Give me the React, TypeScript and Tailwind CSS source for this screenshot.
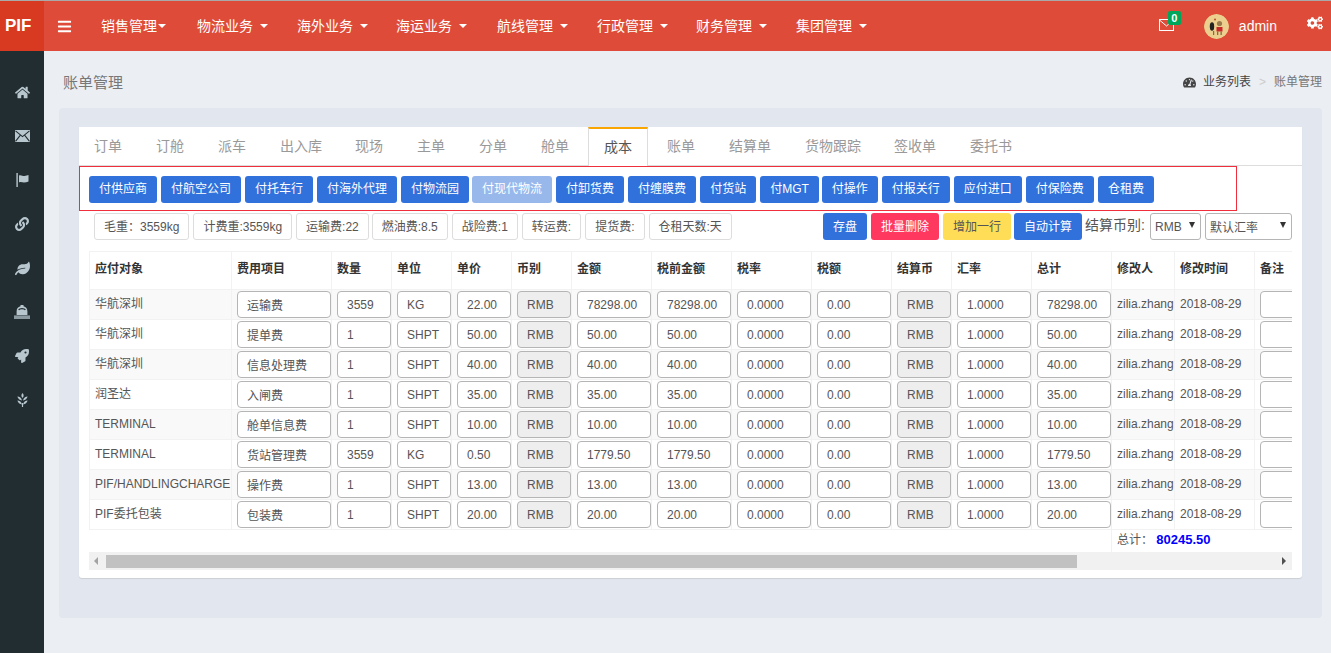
import React from "react";
import { FaHome, FaLink, FaLeaf, FaRocket, FaCogs, FaTachometerAlt, FaBars } from "react-icons/fa";

const F = "font-['Liberation_Sans','Noto_Sans_CJK_SC',sans-serif]";

const menus: [string, string][] = [
  ["销售管理", "w-[96px]"],
  ["物流业务", "w-[100px]"],
  ["海外业务", "w-[99px]"],
  ["海运业务", "w-[101px]"],
  ["航线管理", "w-[100px]"],
  ["行政管理", "w-[99px]"],
  ["财务管理", "w-[100px]"],
  ["集团管理", "w-[100px]"],
];

const tabs = ["订单", "订舱", "派车", "出入库", "现场", "主单", "分单", "舱单", "成本", "账单", "结算单", "货物跟踪", "签收单", "委托书"];

const actions = ["付供应商", "付航空公司", "付托车行", "付海外代理", "付物流园", "付现代物流", "付卸货费", "付缠膜费", "付货站", "付MGT", "付操作", "付报关行", "应付进口", "付保险费", "仓租费"];

const stats = ["毛重：3559kg", "计费重:3559kg", "运输费:22", "燃油费:8.5", "战险费:1", "转运费:", "提货费:", "仓租天数:天"];

const heads = ["应付对象", "费用项目", "数量", "单位", "单价", "币别", "金额", "税前金额", "税率", "税额", "结算币", "汇率", "总计", "修改人", "修改时间", "备注"];

const rows: [string, string, string, string, string, string][] = [
  ["华航深圳", "运输费", "3559", "KG", "22.00", "78298.00"],
  ["华航深圳", "提单费", "1", "SHPT", "50.00", "50.00"],
  ["华航深圳", "信息处理费", "1", "SHPT", "40.00", "40.00"],
  ["润圣达", "入闸费", "1", "SHPT", "35.00", "35.00"],
  ["TERMINAL", "舱单信息费", "1", "SHPT", "10.00", "10.00"],
  ["TERMINAL", "货站管理费", "3559", "KG", "0.50", "1779.50"],
  ["PIF/HANDLINGCHARGE", "操作费", "1", "SHPT", "13.00", "13.00"],
  ["PIF委托包装", "包装费", "1", "SHPT", "20.00", "20.00"],
];

function Field({ v, w, gray, cjk }: { v: string; w: string; gray?: boolean; cjk?: boolean }) {
  return (
    <div className={`${w} h-[27px] ml-[5px] border border-[#b5b5b5] rounded-[4px] pl-[9px] flex items-center text-[12px] text-[#555] ${cjk ? "pt-[3px]" : ""} ${gray ? "bg-[#eee]" : "bg-white"}`}>
      {v}
    </div>
  );
}

function Envelope() {
  return (
    <svg width="15" height="12" viewBox="0 0 15 12">
      <rect width="15" height="12" fill="currentColor" />
      <path d="M0.5 0.8 L7.5 6.6 L14.5 0.8 M0.5 11.4 L5.4 5.2 M14.5 11.4 L9.6 5.2" stroke="#222d32" strokeWidth="1.1" fill="none" />
    </svg>
  );
}

function Flag() {
  return (
    <svg width="13" height="14" viewBox="0 0 13 14" fill="currentColor">
      <rect x="0.4" y="0" width="1.4" height="14" />
      <path d="M3 2.5 C5 1.5 7 3.4 8.5 3 C10 2.7 11.5 2.2 12.5 2 V8.5 C11 9 9.5 9.6 8 9.6 C6.5 9.6 5 8.6 3 9.4Z" />
    </svg>
  );
}

function Wheat() {
  return (
    <svg width="11" height="14" viewBox="0 0 11 14" fill="currentColor">
      <path d="M5.5 0 C7 1.6 7 3.4 5.5 5 C4 3.4 4 1.6 5.5 0Z" />
      <path d="M0.4 3.6 C2.6 3.8 4.4 5 5 7.4 C2.6 7.2 1 6 0.4 3.6Z" />
      <path d="M10.6 3.6 C8.4 3.8 6.6 5 6 7.4 C8.4 7.2 10 6 10.6 3.6Z" />
      <path d="M0.4 7.6 C2.6 7.8 4.4 9 5 11.4 C2.6 11.2 1 10 0.4 7.6Z" />
      <path d="M10.6 7.6 C8.4 7.8 6.6 9 6 11.4 C8.4 11.2 10 10 10.6 7.6Z" />
      <rect x="4.9" y="10" width="1.2" height="4" />
    </svg>
  );
}

function Ship() {
  return (
    <svg width="16" height="14" viewBox="0 0 16 14" fill="currentColor">
      <path d="M6.5 0h3v1.2C12 1.8 13.4 3.6 13.4 6.5V10H2.6V6.5C2.6 3.6 4 1.8 6.5 1.2Z" />
      <path d="M4.6 5 C5.6 3.2 10.4 3.2 11.4 5" stroke="#222d32" strokeWidth="1.2" fill="none" />
      <rect x="0" y="10.4" width="16" height="3.6" opacity="0.7" />
    </svg>
  );
}

function Avatar() {
  return (
    <svg width="25" height="25" viewBox="0 0 25 25" className="rounded-full">
      <circle cx="12.5" cy="12.5" r="12.5" fill="#eccf8f" />
      <ellipse cx="8" cy="12.5" rx="2.2" ry="4.2" fill="#222" />
      <circle cx="15.5" cy="9.5" r="2.6" fill="#9a7b4f" />
      <circle cx="11" cy="5.5" r="1" fill="#b5482f" />
      <rect x="12.5" y="13" width="6" height="4.5" fill="#c8282a" />
      <rect x="13" y="17.5" width="1.3" height="3.5" fill="#8a6a3f" />
      <rect x="16.5" y="17.5" width="1.3" height="3.5" fill="#8a6a3f" />
      <rect x="9" y="17" width="1.2" height="4" fill="#8a6a3f" />
    </svg>
  );
}

export default function App() {
  const cols = ["w-[142px]", "w-[100px]", "w-[60px]", "w-[60px]", "w-[60px]", "w-[60px]", "w-[80px]", "w-[80px]", "w-[80px]", "w-[80px]", "w-[60px]", "w-[80px]", "w-[80px]", "w-[63px]", "w-[80px]", "w-[80px]"];
  const icons = [
    <FaHome size={15} />, <Envelope />, <Flag />, <FaLink size={14} />,
    <FaLeaf size={15} />, <Ship />, <FaRocket size={14} />, <Wheat />,
  ];
  const td = "border-x border-[#f2f2f2]";
  const textCell = `${td} px-[5px] pb-[2px] text-[#555] whitespace-nowrap overflow-hidden`;
  return (
    <div className={`${F} w-[1331px] h-[653px] overflow-hidden bg-[#ebeef3] flex flex-col text-[13px]`}>
      <header className="h-[51px] shrink-0 flex bg-[#de4c39] border-t border-[#a9a9a9] text-white">
        <div className="w-[44px] bg-[#d73a20] flex items-center pl-[5px] text-[17px] font-bold">PIF</div>
        <FaBars size={15} className="ml-[13px] self-center" />
        <nav className="flex items-center ml-[29px] text-[14px]">
          {menus.map(([m, w], i) => (
            <div key={m} className={`${w} flex items-center h-full`}>
              <span className="whitespace-nowrap">{m}</span>
              <span className={`${i === 0 ? "ml-[1px]" : "ml-[7px]"} w-0 h-0 border-x-[4px] border-x-transparent border-t-[4px] border-t-white`} />
            </div>
          ))}
        </nav>
        <div className="ml-auto flex items-center">
          <div className="relative mr-[30px] mt-[-2px]">
            <svg width="15" height="12" viewBox="0 0 15 12" fill="none" stroke="currentColor" strokeWidth="1" className="block">
              <rect x="0.5" y="0.5" width="14" height="11" />
              <path d="M0.5 1 L7.5 7 L14.5 1" />
            </svg>
            <span className="absolute -top-[8px] left-[9px] w-[13px] h-[14px] bg-[#00a65a] rounded-[2px] text-[11px] font-bold leading-[14px] text-center">0</span>
          </div>
          <Avatar />
          <span className="ml-[10px] mr-[30px] text-[14px]">admin</span>
          <FaCogs size={16} className="mr-[8px] mb-[6px]" />
        </div>
      </header>
      <div className="flex flex-1 min-h-0">
        <aside className="w-[44px] shrink-0 bg-[#222d32] flex flex-col items-center text-[#b8c7ce] pt-[19px]">
          {icons.map((ic, i) => (
            <div key={i} className="h-[44px] shrink-0 flex items-center justify-center">{ic}</div>
          ))}
        </aside>
        <main className="flex-1 min-w-0 pl-[15px] pr-[9px]">
          <div className="h-[57px] flex items-center justify-between pt-[8px]">
            <h1 className="ml-[4px] text-[15px] font-normal text-[#777]">账单管理</h1>
            <div className="flex items-center text-[12px] text-[#444] mb-[3px]">
              <FaTachometerAlt size={13} className="mr-[7px]" />
              <span>业务列表</span>
              <span className="mx-[8px] text-[#ccc]">&gt;</span>
              <span className="text-[#777]">账单管理</span>
            </div>
          </div>
          <section className="h-[510px] bg-[#e2e6ee] rounded-[4px] pt-[19px] px-[20px]">
            <div className="h-[451px] bg-white rounded-b-[3px] shadow-[0_1px_1px_rgba(0,0,0,0.1)] flex flex-col">
              <div className="h-[39px] shrink-0 flex border-b border-[#ddd] text-[14px] text-[#999]">
                {tabs.map((t, i) => {
                  const on = t === "成本";
                  const tight = t === "出入库" || t === "货物跟踪";
                  return (
                    <div key={t} className={`h-[39px] shrink-0 flex items-center whitespace-nowrap ${i === 0 ? "-ml-[2px]" : ""} ${tight ? "-mr-px" : ""} ${on ? "px-[15px] mx-[2px] bg-white border-x border-t-2 border-x-[#ddd] border-t-[#f9a602] text-[#555] z-10" : "px-[17px]"}`}>
                      {t}
                    </div>
                  );
                })}
              </div>
              <div className="h-[45px] w-[1158px] shrink-0 border border-[#f02f3d] flex items-center gap-[4px] pl-[9px] pt-[1px]">
                {actions.map((a) => (
                  <div key={a} className={`h-[27px] px-[10px] rounded-[3px] flex items-center text-[12px] text-white whitespace-nowrap ${a === "付现代物流" || a === "付操作" ? "-ml-px" : ""} ${a === "付现代物流" ? "bg-[#98b8ec]" : "bg-[#3071dc]"}`}>
                    {a}
                  </div>
                ))}
              </div>
              <div className="h-[30px] shrink-0 flex items-start pl-[15px] pt-[2px] pr-[10px] text-[12px]">
                <div className="flex gap-[4px]">
                  {stats.map((s, i) => (
                    <div key={s} className={`h-[27px] px-[9px] border border-[#ddd] rounded-[3px] flex items-center text-[#555] whitespace-nowrap ${i === 3 ? "-ml-px" : ""}`}>{s}</div>
                  ))}
                </div>
                <div className="ml-auto flex items-center gap-[4px]">
                  <div className="h-[27px] px-[10px] bg-[#3071dc] text-white rounded-[3px] flex items-center">存盘</div>
                  <div className="h-[27px] px-[10px] bg-[#ff3860] text-white rounded-[3px] flex items-center">批量删除</div>
                  <div className="h-[27px] px-[10px] bg-[#ffdd57] text-[#555] rounded-[3px] flex items-center">增加一行</div>
                  <div className="h-[27px] px-[10px] -ml-px bg-[#3071dc] text-white rounded-[3px] flex items-center">自动计算</div>
                  <span className="text-[#555] text-[14px] -ml-px whitespace-nowrap mb-[2px]">结算币别:</span>
                  <div className="h-[27px] w-[51px] ml-px border border-[#b5b5b5] rounded-[3px] flex items-center justify-between pl-[4px] pr-[5px] text-[#555]">
                    RMB<span className="mb-[3px] w-0 h-0 border-x-[3px] border-x-transparent border-t-[6px] border-t-[#333]" />
                  </div>
                  <div className="h-[27px] w-[87px] border border-[#b5b5b5] rounded-[3px] flex items-center justify-between pl-[4px] pr-[5px] text-[#555]">
                    <span className="pt-[2px]">默认汇率</span><span className="mb-[3px] w-0 h-0 border-x-[3px] border-x-transparent border-t-[6px] border-t-[#333]" />
                  </div>
                </div>
              </div>
              <div className="mx-[10px] mt-[10px] overflow-hidden">
                <table className="table-fixed border-collapse w-[1245px] text-[12px]">
                  <colgroup>
                    {cols.map((c, i) => <col key={i} className={c} />)}
                  </colgroup>
                  <thead>
                    <tr className="h-[38px] border-y border-[#f2f2f2]">
                      {heads.map((h) => (
                        <th key={h} className={`${td} px-[5px] pb-[3px] text-left font-bold text-[#333] whitespace-nowrap`}>{h}</th>
                      ))}
                    </tr>
                  </thead>
                  <tbody>
                    {rows.map((r, i) => (
                      <tr key={i} className={`h-[30px] border-b border-[#f2f2f2] ${i % 2 === 0 ? "bg-[#f9f9f9]" : "bg-white"}`}>
                        <td className={textCell}>{r[0]}</td>
                        <td className={`${td} p-0`}><Field v={r[1]} w="w-[94px]" cjk /></td>
                        <td className={`${td} p-0`}><Field v={r[2]} w="w-[54px]" /></td>
                        <td className={`${td} p-0`}><Field v={r[3]} w="w-[54px]" /></td>
                        <td className={`${td} p-0`}><Field v={r[4]} w="w-[54px]" /></td>
                        <td className={`${td} p-0`}><Field v="RMB" w="w-[54px]" gray /></td>
                        <td className={`${td} p-0`}><Field v={r[5]} w="w-[74px]" /></td>
                        <td className={`${td} p-0`}><Field v={r[5]} w="w-[74px]" /></td>
                        <td className={`${td} p-0`}><Field v="0.0000" w="w-[74px]" /></td>
                        <td className={`${td} p-0`}><Field v="0.00" w="w-[74px]" /></td>
                        <td className={`${td} p-0`}><Field v="RMB" w="w-[54px]" gray /></td>
                        <td className={`${td} p-0`}><Field v="1.0000" w="w-[74px]" /></td>
                        <td className={`${td} p-0`}><Field v={r[5]} w="w-[74px]" /></td>
                        <td className={textCell}>zilia.zhang</td>
                        <td className={textCell}>2018-08-29</td>
                        <td className={`${td} p-0`}><Field v="" w="w-[74px]" /></td>
                      </tr>
                    ))}
                    <tr className="h-[19px]">
                      <td colSpan={13} />
                      <td colSpan={3} className="px-[5px] pb-[2px] text-[#555] border-l border-[#f2f2f2] whitespace-nowrap">
                        总计： <b className="text-[#0000ff] text-[13px]">80245.50</b>
                      </td>
                    </tr>
                  </tbody>
                </table>
              </div>
              <div className="mx-[10px] h-[18px] bg-[#f1f1f1] flex items-center shrink-0">
                <span className="ml-[5px] w-0 h-0 border-y-[4px] border-y-transparent border-r-[4px] border-r-[#a3a3a3]" />
                <div className="ml-[8px] mt-[1px] w-[971px] h-[13px] bg-[#c1c1c1]" />
                <span className="ml-auto mr-[6px] w-0 h-0 border-y-[4px] border-y-transparent border-l-[4px] border-l-[#505050]" />
              </div>
            </div>
          </section>
        </main>
      </div>
    </div>
  );
}
